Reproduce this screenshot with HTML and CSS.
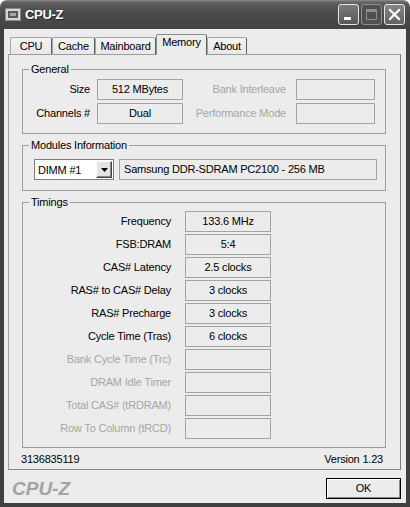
FILE: index.html
```html
<!DOCTYPE html>
<html>
	<head>
		<meta charset="UTF-8">
		<title>CPU-Z</title>
		<link rel="stylesheet" href="styles.css">
	</head>
	<body>
		<div class="window">
			<div class="titlebar">
				<svg class="app-icon" width="16" height="13" viewBox="0 0 16 13">
					<rect x="0.5" y="0.5" width="15" height="12" fill="#d6d6d6" stroke="#8a8a8a"/>
					<rect x="3" y="3" width="10" height="7" fill="#5a5a5a"/>
					<rect x="5" y="5" width="6" height="3" fill="#a8a8a8"/>
				</svg>
				<span class="title">CPU-Z</span>
				<div class="caption-btns">
					<span class="cbtn">
						<svg width="19" height="19" viewBox="0 0 19 19"><rect x="5" y="12" width="7" height="3" fill="#fff"/></svg>
					</span>
					<span class="cbtn off">
						<svg width="19" height="19" viewBox="0 0 19 19"><rect x="4.5" y="4.5" width="10" height="10" fill="none" stroke="#8e8e8e"/><rect x="4" y="4" width="11" height="3" fill="#8e8e8e"/></svg>
					</span>
					<span class="cbtn close">
						<svg width="19" height="19" viewBox="0 0 19 19"><path d="M5 5 L14 14 M14 5 L5 14" stroke="#fff" stroke-width="2.2" stroke-linecap="square"/></svg>
					</span>
				</div>
			</div>
			<div class="client">
				<ul class="tabs">
					<li class="tab t-cpu">CPU</li>
					<li class="tab t-cache">Cache</li>
					<li class="tab t-main">Mainboard</li>
					<li class="tab t-mem active">Memory</li>
					<li class="tab t-about">About</li>
				</ul>
				<div class="panel">
					<fieldset class="group general">
						<legend>General</legend>
						<div class="general-grid">
							<span class="lbl">Size</span>
							<span class="val">512 MBytes</span>
							<span class="lbl wide off">Bank Interleave</span>
							<span class="val"></span>
							<span class="lbl">Channels #</span>
							<span class="val">Dual</span>
							<span class="lbl wide off">Performance Mode</span>
							<span class="val"></span>
						</div>
					</fieldset>
					<fieldset class="group modules">
						<legend>Modules Information</legend>
						<div class="modules-row">
							<div class="combo">
								<span class="combo-text">DIMM #1</span>
								<span class="combo-btn"><svg width="7" height="4" viewBox="0 0 7 4"><path d="M0 0 H7 L3.5 4 Z" fill="#000"/></svg></span>
							</div>
							<span class="val module">Samsung DDR-SDRAM PC2100 - 256 MB</span>
						</div>
					</fieldset>
					<fieldset class="group timings">
						<legend>Timings</legend>
						<div class="timings-grid">
							<span class="lbl">Frequency</span><span class="val">133.6 MHz</span>
							<span class="lbl">FSB:DRAM</span><span class="val">5:4</span>
							<span class="lbl">CAS# Latency</span><span class="val">2.5 clocks</span>
							<span class="lbl">RAS# to CAS# Delay</span><span class="val">3 clocks</span>
							<span class="lbl">RAS# Precharge</span><span class="val">3 clocks</span>
							<span class="lbl">Cycle Time (Tras)</span><span class="val">6 clocks</span>
							<span class="lbl off">Bank Cycle Time (Trc)</span><span class="val"></span>
							<span class="lbl off">DRAM Idle Timer</span><span class="val"></span>
							<span class="lbl off">Total CAS# (tRDRAM)</span><span class="val"></span>
							<span class="lbl off">Row To Column (tRCD)</span><span class="val"></span>
						</div>
					</fieldset>
					<div class="info">
						<span>3136835119</span>
						<span>Version 1.23</span>
					</div>
				</div>
				<div class="bottom">
					<span class="logo">CPU-Z</span>
					<span class="ok">OK</span>
				</div>
			</div>
		</div>
	</body>
</html>
```
FILE: styles.css
```css
*{
	padding:0px;margin:0px;list-style: none;
}
body{
	background: #fff;
	font-family: "Liberation Sans", Arial, sans-serif;
	font-size: 11px;
	letter-spacing: -0.2px;
	color: #000;
}
.window{
	width: 410px;
	height: 507px;
	display: flex;
	flex-direction: column;
}
.titlebar{
	height: 29px;
	flex: none;
	display: flex;
	align-items: center;
	padding: 0 5px;
	border-radius: 7px 7px 0 0;
	background: linear-gradient(#8c8c8c 0px, #666 2px, #545454 6px, #4a4a4a 50%, #434343 100%);
}
.app-icon{
	margin-right: 4px;
}
.title{
	color: #fff;
	font-weight: bold;
	font-size: 13px;
	letter-spacing: -0.3px;
	text-shadow: 1px 1px #262626;
}
.caption-btns{
	margin-left: auto;
	display: flex;
	gap: 2px;
}
.cbtn{
	width: 21px;
	height: 21px;
	box-sizing: border-box;
	border: 1px solid #e6e6e6;
	border-radius: 3px;
	background: linear-gradient(#7a7a7a, #575757);
	display: flex;
}
.cbtn.off{
	border-color: #909090;
	background: #4f4f4f;
}
.cbtn.close{
	background: linear-gradient(#858585, #626262);
}
.client{
	flex: 1;
	display: flex;
	flex-direction: column;
	background: #ececec;
	border: 4px solid #404040;
	border-top: none;
}
.tabs{
	height: 26px;
	flex: none;
	display: flex;
	align-items: flex-end;
	padding-left: 6px;
	margin-bottom: -1px;
	position: relative;
	z-index: 1;
}
.tab{
	height: 17px;
	margin-bottom: 1px;
	box-sizing: border-box;
	border: 1px solid #a6a6a6;
	border-bottom: none;
	border-right: 1px solid #5e5e5e;
	border-radius: 2px 2px 0 0;
	background: linear-gradient(#f4f4f4, #e8e8e8);
	line-height: 16px;
	text-align: center;
}
.tab.active{
	height: 21px;
	margin-bottom: 0;
	border-color: #8f8f8f;
	border-right-color: #5e5e5e;
	background: #ececec;
	line-height: 15px;
}
.t-cpu{ width: 42px; }
.t-cache{ width: 43px; }
.t-main{ width: 61px; }
.t-mem{ width: 51px; }
.t-about{ width: 40px; }
.panel{
	height: 416px;
	flex: none;
	box-sizing: border-box;
	margin: 0 5px 0 4px;
	padding-top: 8px;
	border: 1px solid #9c9c9c;
	border-right-color: #7c7c7c;
	border-bottom-color: #8a8a8a;
	display: flex;
	flex-direction: column;
}
.group{
	margin: 0 14px 0 13px;
	min-width: 0;
	border: 1px solid #9e9e9e;
}
.group legend{
	margin-left: 6px;
	padding: 0 2px;
	line-height: 13px;
}
.group + .group{
	margin-top: 5px;
}
.lbl{
	line-height: 21px;
	text-align: right;
	white-space: nowrap;
}
.lbl.off{
	color: #a6a6a6;
}
.val{
	height: 21px;
	box-sizing: border-box;
	border: 1px solid #a4a4a4;
	line-height: 19px;
	text-align: center;
	white-space: nowrap;
}
.general-grid{
	display: grid;
	grid-template-columns: 74px 86px 113px 79px;
	row-gap: 3px;
	padding: 3px 0 9px;
}
.general-grid .lbl{
	padding-right: 7px;
}
.general-grid .lbl.wide{
	padding-right: 10px;
}
.modules-row{
	display: flex;
	gap: 5px;
	padding: 7px 0 10px 11px;
}
.combo{
	width: 80px;
	height: 21px;
	box-sizing: border-box;
	border: 1px solid #7d7d7d;
	background: #fff;
	display: flex;
	align-items: center;
	padding: 1px;
}
.combo-text{
	flex: 1;
	padding-left: 2px;
}
.combo-btn{
	width: 16px;
	height: 17px;
	box-sizing: border-box;
	background: #e4e4e4;
	border: 1px solid;
	border-color: #fff #404040 #404040 #fff;
	box-shadow: inset -1px -1px #8a8a8a;
	display: flex;
	align-items: center;
	justify-content: center;
}
.val.module{
	width: 258px;
	text-align: left;
	padding-left: 4px;
}
.timings-grid{
	display: grid;
	grid-template-columns: 162px 86px;
	row-gap: 2px;
	padding: 2px 0 8px;
}
.timings-grid .lbl{
	padding-right: 14px;
}
.info{
	height: 21px;
	display: flex;
	justify-content: space-between;
	align-items: center;
	padding: 0 17px 0 12px;
}
.bottom{
	flex: 1;
	display: flex;
	justify-content: space-between;
	align-items: flex-start;
	padding: 8px 5px 0 8px;
}
.logo{
	font-size: 19px;
	font-weight: bold;
	font-style: italic;
	color: #a3a3a3;
	letter-spacing: 0;
	line-height: 21px;
}
.ok{
	width: 75px;
	height: 21px;
	box-sizing: border-box;
	border: 1px solid #000;
	box-shadow: inset 1px 1px #fff, inset -1px -1px #8a8a8a;
	text-align: center;
	line-height: 19px;
}
```
